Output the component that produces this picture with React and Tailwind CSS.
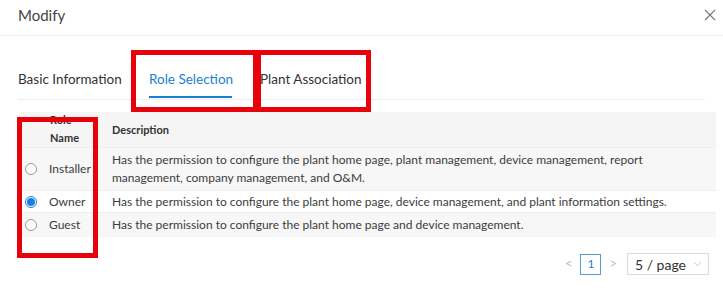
import React from 'react';
import { useState } from 'react';

const roles = [
  {
    name: 'Installer',
    desc: 'Has the permission to configure the plant home page, plant management, device management, report management, company management, and O&M.',
    bg: 'bg-[#f7f7f7]',
    h: 'h-[43px]',
  },
  {
    name: 'Owner',
    desc: 'Has the permission to configure the plant home page, device management, and plant information settings.',
    bg: 'bg-white',
    h: 'h-[22px]',
  },
  {
    name: 'Guest',
    desc: 'Has the permission to configure the plant home page and device management.',
    bg: 'bg-[#f7f7f7]',
    h: 'h-[25px]',
  },
];

function Radio({ checked }) {
  return (
    <span
      className={`inline-flex h-[12px] w-[12px] items-center justify-center rounded-full border ${
        checked ? 'border-[#1a7fe0]' : 'border-[#9a9a9a]'
      } bg-white`}
    >
      {checked && <span className="h-[8px] w-[8px] rounded-full bg-[#1a7fe0]" />}
    </span>
  );
}

export default function App() {
  const [role, setRole] = useState('Owner');

  return (
    <div className="relative h-[294px] w-[723px] overflow-hidden bg-white font-['Lato',sans-serif] text-[#333]">
      <div className="flex h-[36px] items-start justify-between border-b border-[#f0f0f0] pl-[18px] pr-[7px] pt-[4px]">
        <span className="text-[15px] text-[#444]">Modify</span>
        <svg width="12" height="12" viewBox="0 0 12 12" className="mt-[5px]">
          <path d="M1 1L11 11M11 1L1 11" stroke="#777" strokeWidth="1.1" fill="none" />
        </svg>
      </div>

      <div className="mx-[18px] mt-[28px] flex h-[36px] border-b border-[#ececec] text-[13.5px]">
        <span className="w-[131px] pt-[5px] text-[#333]">Basic Information</span>
        <span className="relative h-full w-[111px] pt-[5px] text-[#1a7fd4]">
          Role Selection
          <span className="absolute bottom-[1px] left-0 h-[2px] w-[83px] bg-[#1a7fd4]" />
        </span>
        <span className="pt-[5px] text-[#333]">Plant Association</span>
      </div>

      <div className="ml-[19px] mr-[7px] mt-[12px] text-[12px]">
        <div className="flex h-[35px] items-center bg-[#f5f5f5] text-[11px] font-bold leading-[18px] text-[#333]">
          <div className="w-[93px] pl-[31px]">
            <div className="-mt-[2px]">Role<br />Name</div>
          </div>
          <div>Description</div>
        </div>
        {roles.map((r) => (
          <div
            key={r.name}
            onClick={() => setRole(r.name)}
            className={`flex ${r.h} items-center border-t border-[#eeeeee] ${r.bg} leading-[18px] text-[#3c3c3c]`}
          >
            <div className="flex w-[30px] justify-start pl-[6px]">
              <Radio checked={role === r.name} />
            </div>
            <div className="w-[63px]">{r.name}</div>
            <div className="flex-1 pr-[24px]">{r.desc}</div>
          </div>
        ))}
      </div>

      <div className="mr-[14px] mt-[16px] flex items-center justify-end gap-[8px] text-[13px]">
        <span className="text-[#bbb]">&lt;</span>
        <span className="flex h-[21px] w-[21px] items-center justify-center border border-[#5a9bd5] text-[12px] text-[#1a7fd4]">1</span>
        <span className="text-[#bbb]">&gt;</span>
        <span className="ml-[2px] flex h-[22px] w-[82px] items-center justify-between border border-[#d9d9d9] pl-[7px] pr-[6px] text-[14px] text-[#333]">
          5 / page
          <svg width="9" height="6" viewBox="0 0 9 6">
            <path d="M1 1L4.5 5L8 1" stroke="#ccc" strokeWidth="1" fill="none" />
          </svg>
        </span>
      </div>

      <div className="pointer-events-none absolute left-[131px] top-[50px] h-[62px] w-[127px] border-[5px] border-[#e8000b]" />
      <div className="pointer-events-none absolute left-[256px] top-[50px] h-[62px] w-[115px] border-[5px] border-[#e8000b]" />
      <div className="pointer-events-none absolute left-[17px] top-[117px] h-[141px] w-[81px] border-[5px] border-[#e8000b]" />
    </div>
  );
}
